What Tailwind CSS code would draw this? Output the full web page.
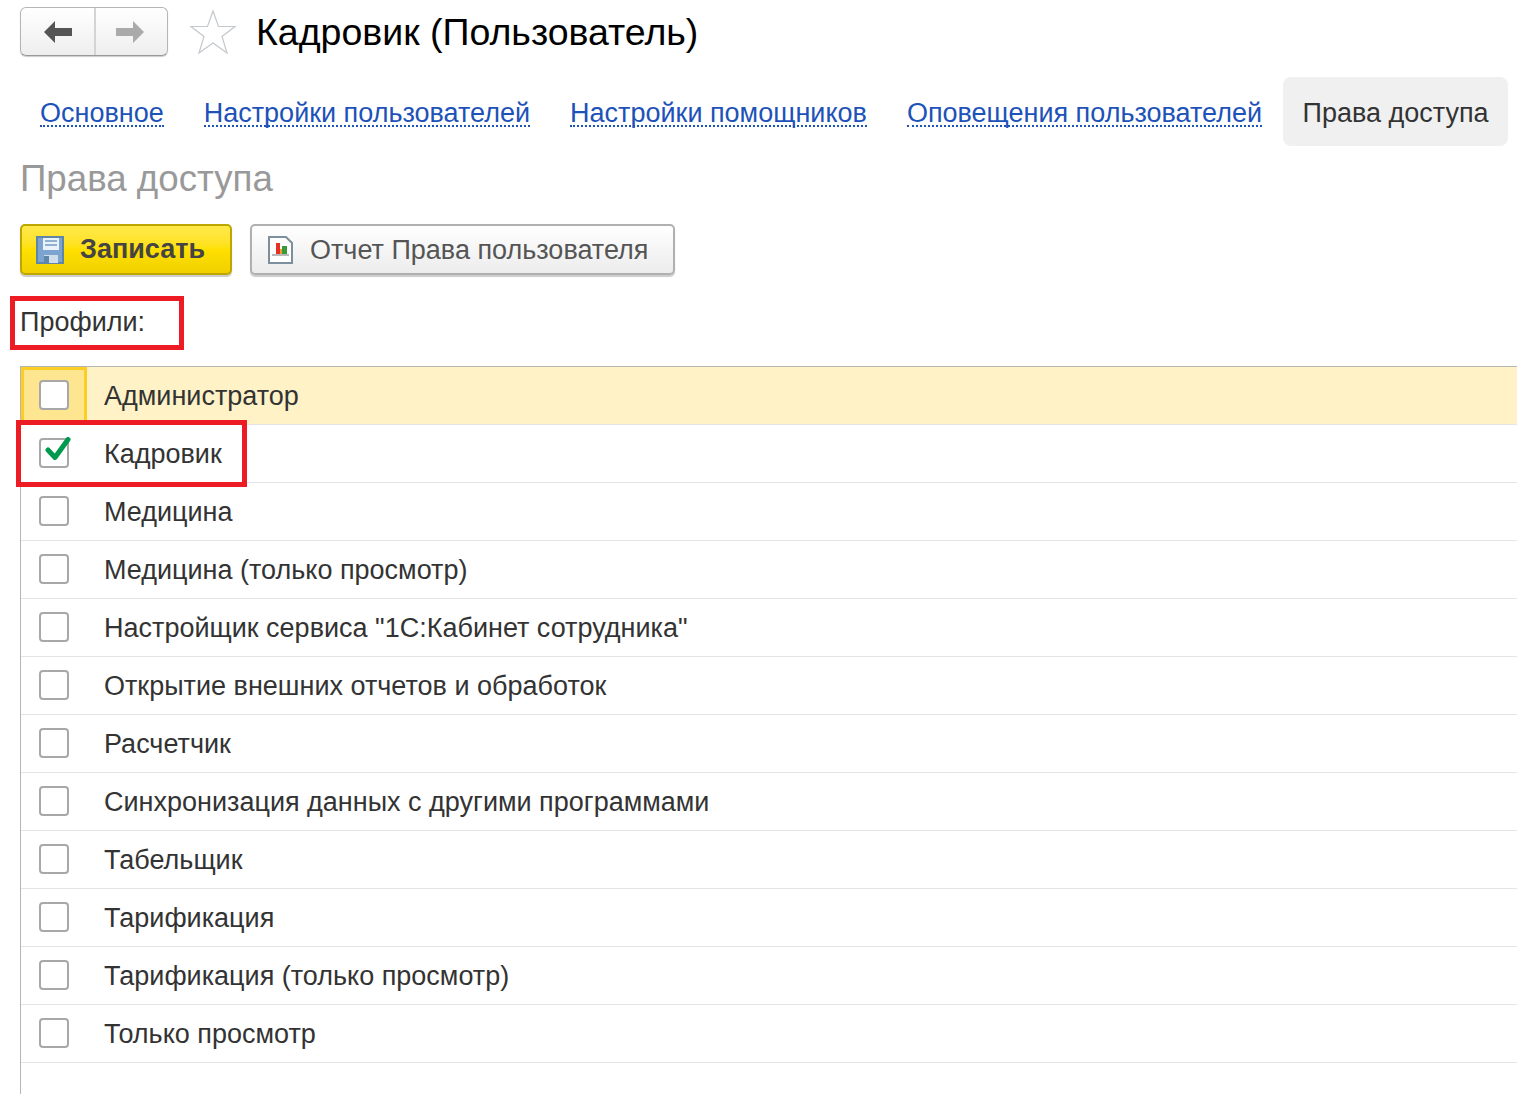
<!DOCTYPE html>
<html lang="ru">
<head>
<meta charset="UTF-8" />
<title>Кадровик (Пользователь)</title>
<script src="https://cdn.jsdelivr.net/npm/@tailwindcss/browser@4"></script>
</head>
<body class="bg-white h-[1094px] overflow-hidden font-['Liberation_Sans',Arial,sans-serif] text-[#333]">
<div class="relative h-[1094px] w-[1517px] overflow-hidden">

  <!-- header -->
  <div class="flex items-center h-[63px] pl-[20px]">
    <div class="flex w-[148px] h-[49px] rounded-[6px] border border-[#b5b5b5] border-b-[#999] shadow-[0_1px_1px_#ccc] bg-gradient-to-b from-white to-[#eeeeee]">
      <div class="w-[75px] flex items-center justify-center border-r-2 border-[#d4d4d4]">
        <svg width="28" height="22" viewBox="0 0 28 22"><path d="M0 11 11 0V7H28V15H11V22Z" fill="#555"/></svg>
      </div>
      <div class="flex-1 pr-[4px] flex items-center justify-center">
        <svg width="28" height="22" viewBox="0 0 28 22"><path d="M28 11 17 0V7H0V15H17V22Z" fill="#aaa"/></svg>
      </div>
    </div>
    <svg class="ml-[21px]" width="48" height="46" viewBox="0 0 48 46"><path d="M24 2 29.500 17.500H46L33 27.500 38 44 24 34 10 44 15 27.500 2 17.500H18.500Z" fill="white" stroke="#c4c8cc" stroke-width="1.200"/></svg>
    <h1 class="ml-[19px] mt-[3px] text-[37.500px] leading-none text-black font-normal">Кадровик (Пользователь)</h1>
  </div>

  <!-- tabs -->
  <div class="flex items-center h-[69px] mt-[14px] pl-[40px] text-[27px]">
    <a class="pt-[4px] text-[#1d52b8] border-b-2 border-dotted border-[#1d52b8] leading-[24px]">Основное</a>
    <a class="ml-[40px] pt-[4px] text-[#1d52b8] border-b-2 border-dotted border-[#1d52b8] leading-[24px]">Настройки пользователей</a>
    <a class="ml-[40px] pt-[4px] text-[#1d52b8] border-b-2 border-dotted border-[#1d52b8] leading-[24px]">Настройки помощников</a>
    <a class="ml-[40px] pt-[4px] text-[#1d52b8] border-b-2 border-dotted border-[#1d52b8] leading-[24px]">Оповещения пользователей</a>
    <div class="ml-[21px] pt-[4px] h-[69px] w-[225px] rounded-[8px] bg-[#f0f0f0] flex items-center justify-center">Права доступа</div>
  </div>

  <h2 class="mt-[12px] pl-[20px] text-[36.700px] leading-[42px] text-[#999] font-normal">Права доступа</h2>

  <!-- buttons -->
  <div class="flex mt-[24px] pl-[20px] gap-[18px]">
    <button class="flex items-center w-[212px] h-[51px] pl-[14px] rounded-[5px] border-2 border-[#bda600] shadow-[0_2px_1px_#ccc] bg-gradient-to-b from-[#ffe94a] via-[#ffe000] to-[#f0d000]">
      <svg width="28" height="28" viewBox="0 0 28 28"><path d="M1 1H27V27H1Z" fill="#7ba5d0" stroke="#5f85a8" stroke-width="2"/><path d="M7 2H23V14H7Z" fill="#eaf1f8"/><path d="M9 5H21M9 9H21" stroke="#8fb0d0" stroke-width="2"/><path d="M8 19H22V27H8Z" fill="#cfdde9"/><path d="M8 20H13V27H8Z" fill="#5f85a8"/></svg>
      <span class="ml-[16px] text-[27px] font-bold text-[#444]">Записать</span>
    </button>
    <button class="flex items-center w-[425px] h-[51px] pl-[16px] rounded-[5px] border-2 border-[#b0b0b0] shadow-[0_2px_1px_#ccc] bg-gradient-to-b from-white to-[#ececec]">
      <svg width="25" height="28" viewBox="0 0 25 28"><path d="M1 1H18L24 7V27H1Z" fill="#fff" stroke="#7c8f9e" stroke-width="2"/><path d="M4 19H21" stroke="#a0a0a0" stroke-width="1.500"/><path d="M8 7H12V18H8Z" fill="#e53225"/><path d="M12 13H14V18H12Z" fill="#f0a030"/><path d="M14 10H19V18H14Z" fill="#3a9a3a"/></svg>
      <span class="ml-[17px] mt-[2px] text-[27px] text-[#555]">Отчет Права пользователя</span>
    </button>
  </div>

  <div class="mt-[31px] pl-[20px] text-[27px] leading-[32px]">Профили:</div>

  <!-- profiles list -->
  <div class="mt-[28px] ml-[20px] h-[730px] border-l border-t border-[#b5b5b5]">
    <div class="flex items-center h-[58px] bg-[#fef2c6] border-b border-[#e4e4e4]">
      <div class="w-[66px] h-[57px] pb-[2px] border-[3px] border-[#fcce24] bg-[#fee690] flex items-center justify-center">
        <span class="block w-[30px] h-[30px] rounded-[4px] border-2 border-[#a8a8a8] bg-white"></span>
      </div>
      <span class="ml-[17px] pt-[2px] text-[27px]">Администратор</span>
    </div>
    <div class="flex items-center h-[58px] border-b border-[#e4e4e4]">
      <div class="w-[66px] pb-[2px] flex items-center justify-center relative">
        <span class="block w-[30px] h-[30px] rounded-[4px] border-2 border-[#a8a8a8] bg-white"></span>
        <svg class="absolute left-[24px] -top-[1px]" width="28" height="26" viewBox="0 0 28 26"><path d="M3 13 10 20.500 23 2.500" fill="none" stroke="#00994d" stroke-width="5" stroke-linecap="round" stroke-linejoin="round"/></svg>
      </div>
      <span class="ml-[17px] pt-[2px] text-[27px]">Кадровик</span>
    </div>
    <div class="flex items-center h-[58px] border-b border-[#e4e4e4]"><div class="w-[66px] pb-[2px] flex items-center justify-center"><span class="block w-[30px] h-[30px] rounded-[4px] border-2 border-[#a8a8a8] bg-white"></span></div><span class="ml-[17px] pt-[2px] text-[27px]">Медицина</span></div>
    <div class="flex items-center h-[58px] border-b border-[#e4e4e4]"><div class="w-[66px] pb-[2px] flex items-center justify-center"><span class="block w-[30px] h-[30px] rounded-[4px] border-2 border-[#a8a8a8] bg-white"></span></div><span class="ml-[17px] pt-[2px] text-[27px]">Медицина (только просмотр)</span></div>
    <div class="flex items-center h-[58px] border-b border-[#e4e4e4]"><div class="w-[66px] pb-[2px] flex items-center justify-center"><span class="block w-[30px] h-[30px] rounded-[4px] border-2 border-[#a8a8a8] bg-white"></span></div><span class="ml-[17px] pt-[2px] text-[27px]">Настройщик сервиса "1С:Кабинет сотрудника"</span></div>
    <div class="flex items-center h-[58px] border-b border-[#e4e4e4]"><div class="w-[66px] pb-[2px] flex items-center justify-center"><span class="block w-[30px] h-[30px] rounded-[4px] border-2 border-[#a8a8a8] bg-white"></span></div><span class="ml-[17px] pt-[2px] text-[27px]">Открытие внешних отчетов и обработок</span></div>
    <div class="flex items-center h-[58px] border-b border-[#e4e4e4]"><div class="w-[66px] pb-[2px] flex items-center justify-center"><span class="block w-[30px] h-[30px] rounded-[4px] border-2 border-[#a8a8a8] bg-white"></span></div><span class="ml-[17px] pt-[2px] text-[27px]">Расчетчик</span></div>
    <div class="flex items-center h-[58px] border-b border-[#e4e4e4]"><div class="w-[66px] pb-[2px] flex items-center justify-center"><span class="block w-[30px] h-[30px] rounded-[4px] border-2 border-[#a8a8a8] bg-white"></span></div><span class="ml-[17px] pt-[2px] text-[27px]">Синхронизация данных с другими программами</span></div>
    <div class="flex items-center h-[58px] border-b border-[#e4e4e4]"><div class="w-[66px] pb-[2px] flex items-center justify-center"><span class="block w-[30px] h-[30px] rounded-[4px] border-2 border-[#a8a8a8] bg-white"></span></div><span class="ml-[17px] pt-[2px] text-[27px]">Табельщик</span></div>
    <div class="flex items-center h-[58px] border-b border-[#e4e4e4]"><div class="w-[66px] pb-[2px] flex items-center justify-center"><span class="block w-[30px] h-[30px] rounded-[4px] border-2 border-[#a8a8a8] bg-white"></span></div><span class="ml-[17px] pt-[2px] text-[27px]">Тарификация</span></div>
    <div class="flex items-center h-[58px] border-b border-[#e4e4e4]"><div class="w-[66px] pb-[2px] flex items-center justify-center"><span class="block w-[30px] h-[30px] rounded-[4px] border-2 border-[#a8a8a8] bg-white"></span></div><span class="ml-[17px] pt-[2px] text-[27px]">Тарификация (только просмотр)</span></div>
    <div class="flex items-center h-[58px] border-b border-[#e4e4e4]"><div class="w-[66px] pb-[2px] flex items-center justify-center"><span class="block w-[30px] h-[30px] rounded-[4px] border-2 border-[#a8a8a8] bg-white"></span></div><span class="ml-[17px] pt-[2px] text-[27px]">Только просмотр</span></div>
  </div>

  <!-- red annotation boxes -->
  <div class="absolute left-[10px] top-[296px] w-[174px] h-[54px] border-[5px] border-[#ed1c24]"></div>
  <div class="absolute left-[16px] top-[420px] w-[231px] h-[67px] border-[5px] border-[#ed1c24]"></div>
</div>
</body>
</html>
